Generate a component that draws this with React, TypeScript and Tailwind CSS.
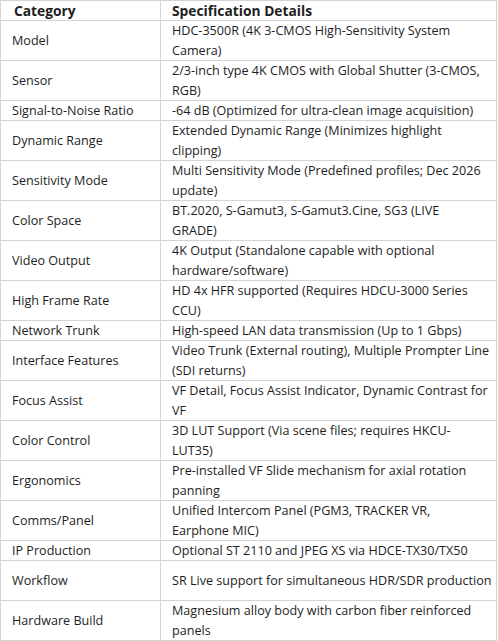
const rows: { cat: string; lines: string[]; tall?: boolean }[] = [
  { cat: "Model", lines: ["HDC-3500R (4K 3-CMOS High-Sensitivity System", "Camera)"] },
  { cat: "Sensor", lines: ["2/3-inch type 4K CMOS with Global Shutter (3-CMOS,", "RGB)"] },
  { cat: "Signal-to-Noise Ratio", lines: ["-64 dB (Optimized for ultra-clean image acquisition)"] },
  { cat: "Dynamic Range", lines: ["Extended Dynamic Range (Minimizes highlight", "clipping)"] },
  { cat: "Sensitivity Mode", lines: ["Multi Sensitivity Mode (Predefined profiles; Dec 2026", "update)"] },
  { cat: "Color Space", lines: ["BT.2020, S-Gamut3, S-Gamut3.Cine, SG3 (LIVE", "GRADE)"] },
  { cat: "Video Output", lines: ["4K Output (Standalone capable with optional", "hardware/software)"] },
  { cat: "High Frame Rate", lines: ["HD 4x HFR supported (Requires HDCU-3000 Series", "CCU)"] },
  { cat: "Network Trunk", lines: ["High-speed LAN data transmission (Up to 1 Gbps)"] },
  { cat: "Interface Features", lines: ["Video Trunk (External routing), Multiple Prompter Line", "(SDI returns)"] },
  { cat: "Focus Assist", lines: ["VF Detail, Focus Assist Indicator, Dynamic Contrast for", "VF"] },
  { cat: "Color Control", lines: ["3D LUT Support (Via scene files; requires HKCU-", "LUT35)"] },
  { cat: "Ergonomics", lines: ["Pre-installed VF Slide mechanism for axial rotation", "panning"] },
  { cat: "Comms/Panel", lines: ["Unified Intercom Panel (PGM3, TRACKER VR,", "Earphone MIC)"] },
  { cat: "IP Production", lines: ["Optional ST 2110 and JPEG XS via HDCE-TX30/TX50"] },
  { cat: "Workflow", lines: ["SR Live support for simultaneous HDR/SDR production"], tall: true },
  { cat: "Hardware Build", lines: ["Magnesium alloy body with carbon fiber reinforced", "panels"] },
];

export default function App() {
  return (
    <div className="bg-white min-h-screen" style={{ fontFamily: '"Open Sans", "Noto Sans", sans-serif' }}>
      <div className="w-[497px] border-l border-t border-[#d4d4d4] text-[12.6px] leading-[20px] text-[#1e1e1e]">
        <div className="flex h-[20px] text-[13.8px]">
          <div className="w-[160px] shrink-0 border-r border-b border-[#d4d4d4] pl-[13px] font-bold flex items-center">
            Category
          </div>
          <div className="w-[336px] shrink-0 border-r border-b border-[#d4d4d4] pl-[11px] font-bold flex items-center">
            Specification Details
          </div>
        </div>
        {rows.map((r) => {
          const tall = r.lines.length > 1 || r.tall;
          return (
            <div key={r.cat} className={`flex ${tall ? "h-[40px]" : "h-[20px]"}`}>
              <div className="w-[160px] shrink-0 border-r border-b border-[#d4d4d4] pl-[11px] flex items-center whitespace-nowrap">
                {r.cat}
              </div>
              <div className="w-[336px] shrink-0 border-r border-b border-[#d4d4d4] pl-[11px] flex flex-col justify-center whitespace-nowrap">
                {r.lines.map((l) => (
                  <div key={l}>{l}</div>
                ))}
              </div>
            </div>
          );
        })}
      </div>
    </div>
  );
}
